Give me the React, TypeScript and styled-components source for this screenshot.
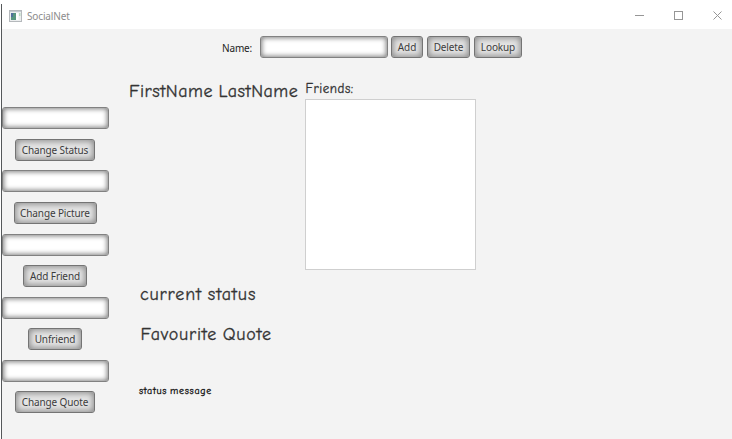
import React from "react";
import styled, { createGlobalStyle } from "styled-components";

const GlobalStyle = createGlobalStyle`
  * { box-sizing: border-box; }
  body { margin: 0; background: #fff; overflow: hidden; }
`;

const Window = styled.div`
  width: 732px;
  height: 439px;
  padding: 4px 0 0 1px;
  font-family: "Noto Sans", sans-serif;
`;

const Frame = styled.div`
  height: 435px;
  display: flex;
  flex-direction: column;
  border-left: 1px solid #55585a;
  background: #f3f3f3;
`;

const TitleBar = styled.header`
  flex: none;
  height: 25px;
  display: flex;
  align-items: center;
  padding: 0 9px 2px 7px;
  background: #fff;
`;

const Title = styled.span`
  flex: 1;
  margin-left: 5px;
  font-size: 10px;
  line-height: 14px;
  letter-spacing: -0.15px;
  color: #8c8c8c;
`;

const Controls = styled.div`
  display: flex;
  gap: 28px;
`;

const Toolbar = styled.div`
  flex: none;
  height: 22px;
  margin-top: 7px;
  padding-left: 220px;
  display: flex;
  align-items: center;
`;

const ToolLabel = styled.label`
  width: 38px;
  padding-top: 1px;
  font-size: 10px;
  line-height: 14px;
  letter-spacing: -0.15px;
  white-space: nowrap;
  color: #222;
`;

const Field = styled.input<{ $width: number }>`
  flex: none;
  width: ${(p) => p.$width}px;
  height: 22px;
  padding: 0 6px;
  border: 1px solid #818181;
  border-radius: 3px;
  outline: none;
  background: #fff;
  box-shadow: inset 0 0 5px 1px rgba(0, 0, 0, 0.5);
`;

const Button = styled.button<{ $width: number }>`
  flex: none;
  width: ${(p) => p.$width}px;
  height: 22px;
  padding: 0;
  border: 1px solid #747474;
  border-radius: 3px;
  background: #e4e4e4;
  box-shadow: inset 0 0 6px 1px rgba(0, 0, 0, 0.42);
  font-family: "Noto Sans", sans-serif;
  font-size: 10px;
  line-height: 14px;
  letter-spacing: -0.12px;
  white-space: nowrap;
  color: #3c3c3c;
`;

const ButtonRow = styled.div`
  display: flex;
  gap: 4px;
  margin-left: 3px;
`;

const Body = styled.main`
  flex: 1;
  display: flex;
`;

const Sidebar = styled.aside`
  width: 107px;
  padding-top: 49.2px;
`;

const Action = styled.div`
  height: 63.2px;
  display: flex;
  flex-direction: column;
  align-items: center;
  gap: 9.5px;

  ${Button} {
    margin-right: 1px;
  }
`;

const Profile = styled.section`
  padding: 20px 0 0 20px;
  display: flex;
  flex-direction: column;
`;

const Summary = styled.div`
  display: flex;
`;

const Friends = styled.div`
  width: 172px;
  margin-left: 6.4px;
`;

const FriendList = styled.div`
  width: 171px;
  height: 171px;
  background: #fff;
  border: 1px solid #cfcfcf;
`;

const Hand = styled.div<{
  $size: number;
  $width: number;
  $height: number;
  $spacing?: number;
  $dark?: boolean;
}>`
  font-family: "Comic Sans MS", "Comic Neue", Lato, sans-serif;
  font-size: ${(p) => p.$size}px;
  width: ${(p) => p.$width}px;
  height: ${(p) => p.$height}px;
  line-height: ${(p) => p.$height}px;
  letter-spacing: ${(p) => p.$spacing ?? 0}px;
  word-spacing: -1px;
  white-space: nowrap;
  color: ${(p) => (p.$dark ? "#111" : "#333")};
  -webkit-text-stroke: 0.3px currentColor;
`;

const Messages = styled.div`
  display: flex;
  flex-direction: column;
  padding: 13px 0 0 11px;
`;

const Quote = styled.div`
  margin: 16px 0 0 0.5px;
`;

const StatusLine = styled.div`
  margin: 37px 0 0 -1px;
`;

const actions = [
  { label: "Change Status", width: 80 },
  { label: "Change Picture", width: 83 },
  { label: "Add Friend", width: 64 },
  { label: "Unfriend", width: 54 },
  { label: "Change Quote", width: 80 },
];

function AppIcon() {
  return (
    <svg width="13" height="12" viewBox="0 0 13 12">
      <rect x="0.5" y="0.5" width="12" height="11" fill="#eceeef" stroke="#b5b9bc" />
      <path d="M1 1.5h11" stroke="#c5cbd0" />
      <rect x="2" y="3" width="5" height="7" fill="#4c7f91" />
      <path d="M2 7l3-4h2v7H2z" fill="#58967f" />
      <rect x="2" y="3" width="2" height="4" fill="#526f9c" />
      <rect x="7" y="3" width="2.5" height="7" fill="#fff" />
      <path d="M10 3h1.5v3H10z" fill="#b9dcc0" />
    </svg>
  );
}

export default function App() {
  return (
    <Window>
      <GlobalStyle />
      <Frame>
        <TitleBar>
          <AppIcon />
          <Title>SocialNet</Title>
          <Controls>
            <svg width="11" height="11" viewBox="0 0 11 11">
              <path d="M1 5.5h9" stroke="#969696" />
            </svg>
            <svg width="11" height="11" viewBox="0 0 11 11">
              <rect x="1.5" y="1.5" width="8" height="8" fill="none" stroke="#969696" />
            </svg>
            <svg width="11" height="11" viewBox="0 0 11 11">
              <path d="M1.5 1.5l8 8M9.5 1.5l-8 8" stroke="#969696" />
            </svg>
          </Controls>
        </TitleBar>
        <Toolbar>
          <ToolLabel htmlFor="name">Name:</ToolLabel>
          <Field id="name" $width={128} />
          <ButtonRow>
            <Button $width={32}>Add</Button>
            <Button $width={43}>Delete</Button>
            <Button $width={48}>Lookup</Button>
          </ButtonRow>
        </Toolbar>
        <Body>
          <Sidebar>
            {actions.map((a) => (
              <Action key={a.label}>
                <Field $width={107} aria-label={a.label} />
                <Button $width={a.width}>{a.label}</Button>
              </Action>
            ))}
          </Sidebar>
          <Profile>
            <Summary>
              <Hand $size={18} $width={170} $height={28} $spacing={0.52}>FirstName LastName</Hand>
              <Friends>
                <Hand $size={13} $width={60} $height={21} $spacing={0.55}>Friends:</Hand>
                <FriendList />
              </Friends>
            </Summary>
            <Messages>
              <Hand $size={18} $width={130} $height={24} $spacing={0.86}>current status</Hand>
              <Quote>
                <Hand $size={18} $width={140} $height={24} $spacing={0.79}>Favourite Quote</Hand>
              </Quote>
              <StatusLine>
                <Hand $size={10} $width={90} $height={14} $spacing={0.68} $dark>status message</Hand>
              </StatusLine>
            </Messages>
          </Profile>
        </Body>
      </Frame>
    </Window>
  );
}
